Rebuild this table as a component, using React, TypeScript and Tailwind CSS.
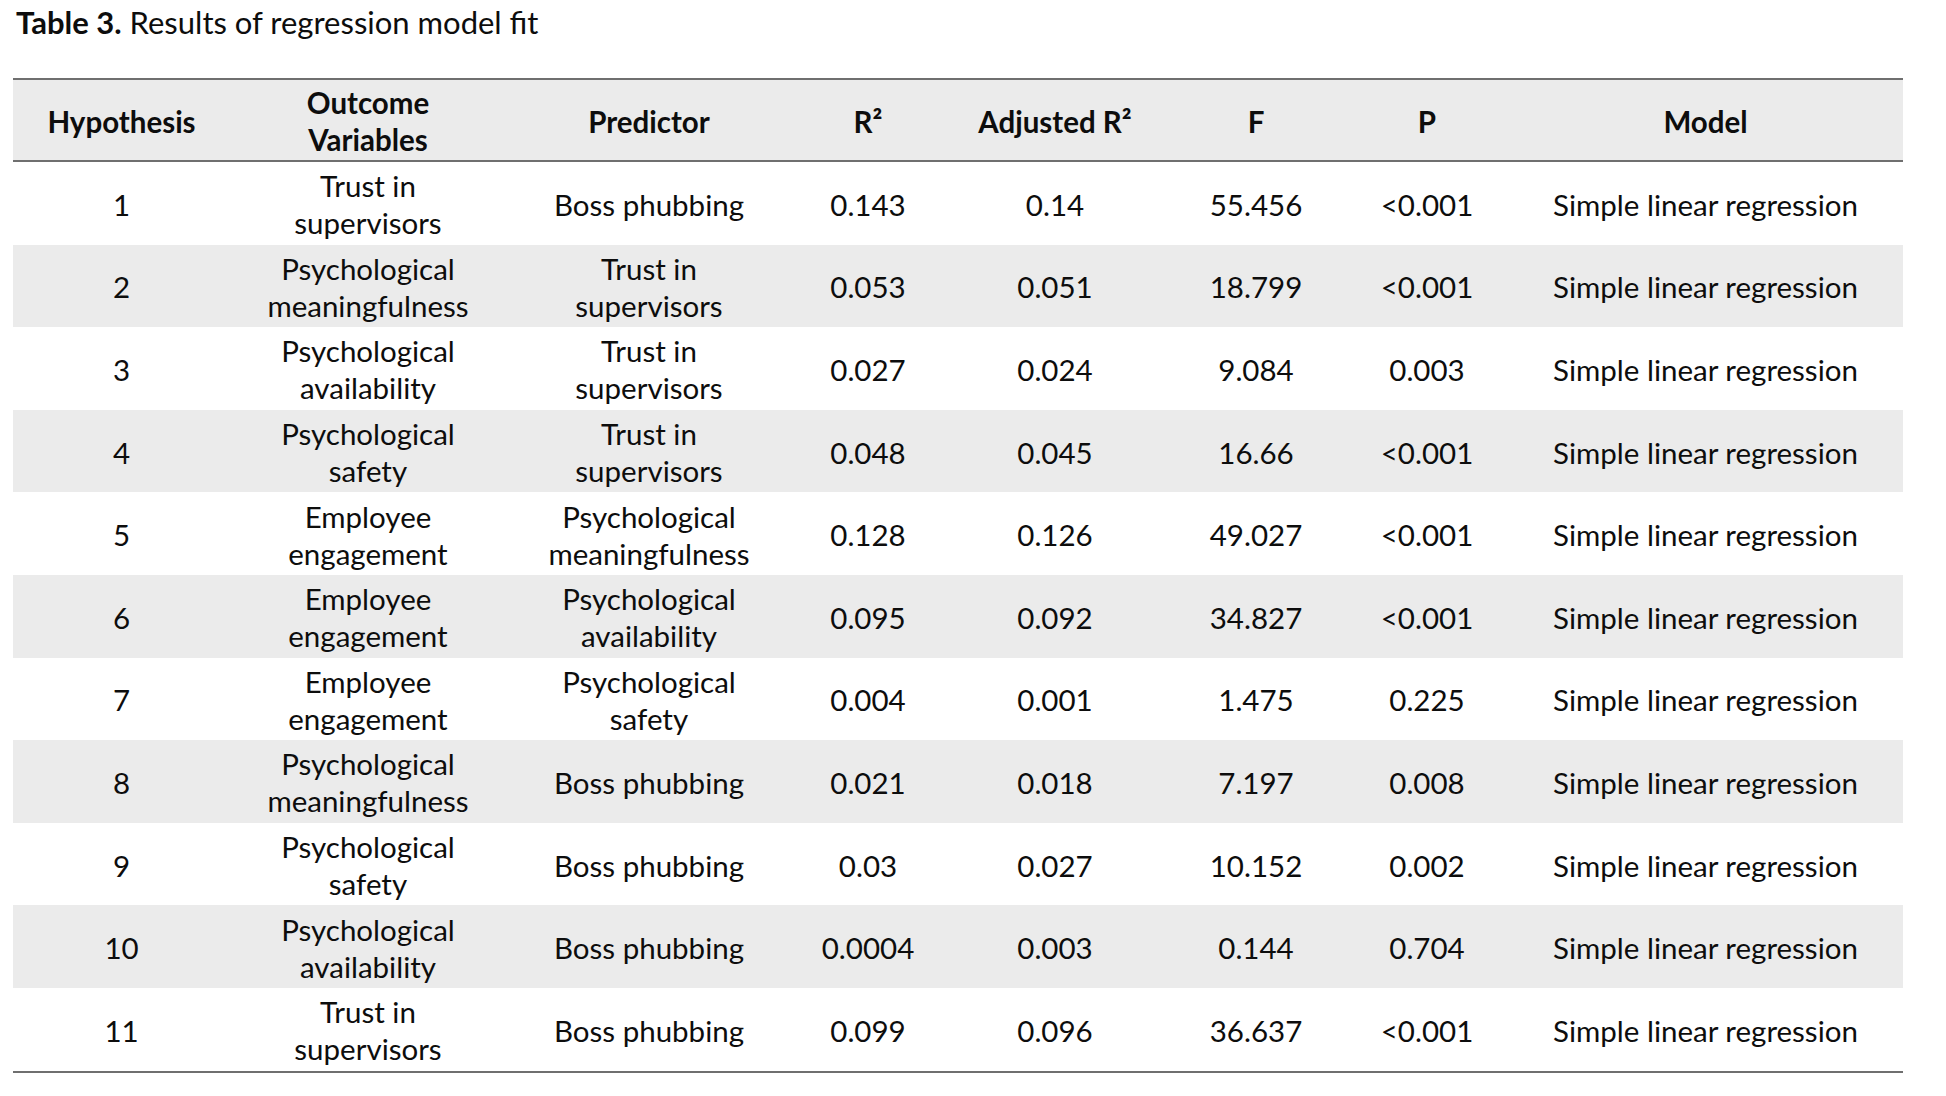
import React from "react";

type Row = {
  hypothesis: string;
  outcome: [string, string];
  predictor: string[];
  r2: string;
  adjusted: string;
  f: string;
  p: string;
};

const rows: Row[] = [
  { hypothesis: "1", outcome: ["Trust in", "supervisors"], predictor: ["Boss phubbing"], r2: "0.143", adjusted: "0.14", f: "55.456", p: "<0.001" },
  { hypothesis: "2", outcome: ["Psychological", "meaningfulness"], predictor: ["Trust in", "supervisors"], r2: "0.053", adjusted: "0.051", f: "18.799", p: "<0.001" },
  { hypothesis: "3", outcome: ["Psychological", "availability"], predictor: ["Trust in", "supervisors"], r2: "0.027", adjusted: "0.024", f: "9.084", p: "0.003" },
  { hypothesis: "4", outcome: ["Psychological", "safety"], predictor: ["Trust in", "supervisors"], r2: "0.048", adjusted: "0.045", f: "16.66", p: "<0.001" },
  { hypothesis: "5", outcome: ["Employee", "engagement"], predictor: ["Psychological", "meaningfulness"], r2: "0.128", adjusted: "0.126", f: "49.027", p: "<0.001" },
  { hypothesis: "6", outcome: ["Employee", "engagement"], predictor: ["Psychological", "availability"], r2: "0.095", adjusted: "0.092", f: "34.827", p: "<0.001" },
  { hypothesis: "7", outcome: ["Employee", "engagement"], predictor: ["Psychological", "safety"], r2: "0.004", adjusted: "0.001", f: "1.475", p: "0.225" },
  { hypothesis: "8", outcome: ["Psychological", "meaningfulness"], predictor: ["Boss phubbing"], r2: "0.021", adjusted: "0.018", f: "7.197", p: "0.008" },
  { hypothesis: "9", outcome: ["Psychological", "safety"], predictor: ["Boss phubbing"], r2: "0.03", adjusted: "0.027", f: "10.152", p: "0.002" },
  { hypothesis: "10", outcome: ["Psychological", "availability"], predictor: ["Boss phubbing"], r2: "0.0004", adjusted: "0.003", f: "0.144", p: "0.704" },
  { hypothesis: "11", outcome: ["Trust in", "supervisors"], predictor: ["Boss phubbing"], r2: "0.099", adjusted: "0.096", f: "36.637", p: "<0.001" },
];

// column widths measured off the reference, left to right
const cols = [
  "w-[217px]",
  "w-[276px]",
  "w-[286px]",
  "w-[152px]",
  "w-[222px]",
  "w-[180px]",
  "w-[162px]",
  "w-[395px]",
];

function Cell({ col, children }: { col: number; children: React.ReactNode }) {
  return (
    <div className={`${cols[col]} shrink-0 flex flex-col items-center justify-center text-center pt-[2px]`}>
      {children}
    </div>
  );
}

function Lines({ lines }: { lines: string[] }) {
  return (
    <>
      {lines.map((l, i) => (
        <span key={i} className="block">
          {l}
        </span>
      ))}
    </>
  );
}

export default function App() {
  return (
    <div
      className="w-[1946px] h-[1096px] bg-white text-[#0d0d0d] px-[13px] pt-[4px] text-[29.5px] leading-[37px]"
      style={{ fontFamily: "Lato, 'Open Sans', sans-serif" }}
    >
      {/* Caption */}
      <p className="pl-[3px] text-[31px] leading-[37px]">
        <span className="font-bold">Table 3.</span> Results of regression model fit
      </p>

      <div className="mt-[37px] w-[1890px]">
        {/* Header */}
        <div className="flex h-[84px] border-y-2 border-[#6f6f6f] bg-[#ebebeb] font-bold">
          <Cell col={0}>Hypothesis</Cell>
          <Cell col={1}>
            <Lines lines={["Outcome", "Variables"]} />
          </Cell>
          <Cell col={2}>Predictor</Cell>
          <Cell col={3}>R²</Cell>
          <Cell col={4}>Adjusted R²</Cell>
          <Cell col={5}>F</Cell>
          <Cell col={6}>P</Cell>
          <Cell col={7}>Model</Cell>
        </div>

        {/* Body */}
        <div className="border-b-2 border-[#6f6f6f]">
          {rows.map((r, i) => (
            <div
              key={r.hypothesis}
              className={`flex h-[82.6px] ${i % 2 === 1 ? "bg-[#ebebeb]" : "bg-white"}`}
            >
              <Cell col={0}>{r.hypothesis}</Cell>
              <Cell col={1}>
                <Lines lines={r.outcome} />
              </Cell>
              <Cell col={2}>
                <Lines lines={r.predictor} />
              </Cell>
              <Cell col={3}>{r.r2}</Cell>
              <Cell col={4}>{r.adjusted}</Cell>
              <Cell col={5}>{r.f}</Cell>
              <Cell col={6}>{r.p}</Cell>
              <Cell col={7}>Simple linear regression</Cell>
            </div>
          ))}
        </div>
      </div>
    </div>
  );
}
